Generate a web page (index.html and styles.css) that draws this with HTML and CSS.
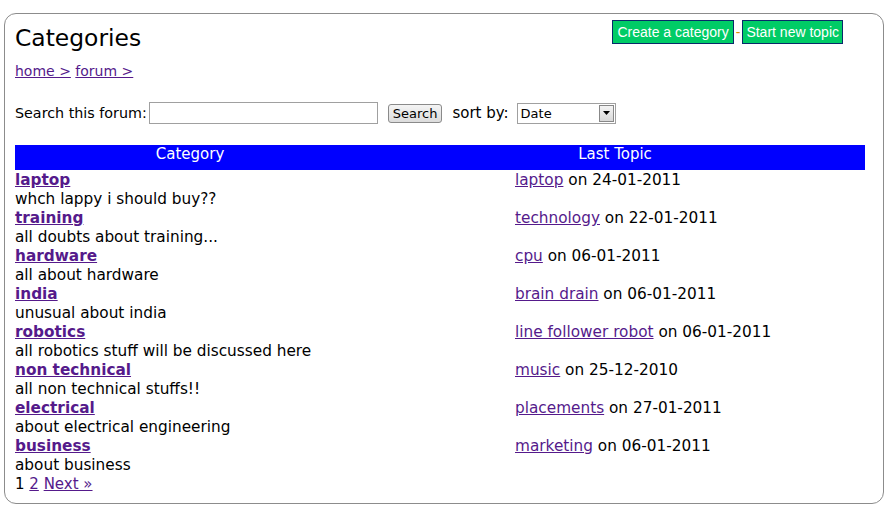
FILE: index.html
```html
<!DOCTYPE html>
<html>
<head>
<meta charset="utf-8">
<link rel="stylesheet" href="styles.css">
</head>
<body>
<div class="box">
  <div class="top">
    <h1 class="title">Categories</h1>
    <div class="actions">
      <a class="btn" href="#">Create a category</a><span class="sep">-</span><a class="btn" href="#">Start new topic</a>
    </div>
  </div>
  <div class="crumbs"><a href="#">home &gt;</a> <a href="#">forum &gt;</a></div>
  <div class="search">
    <span class="lbl">Search this forum:</span>
    <input class="sinput" type="text">
    <button class="sbtn">Search</button>
    <span class="sort">sort by:</span>
    <div class="select"><span>Date</span><span class="arrow"><svg width="7" height="4" viewBox="0 0 7 4"><path d="M0 0h7L3.5 4z" fill="#000"/></svg></span></div>
  </div>
  <div class="head">
    <div class="hc1">Category</div>
    <div class="hc2">Last Topic</div>
  </div>
  <div class="rows">
    <div class="row"><div><a class="cat" href="#">laptop</a><div>whch lappy i should buy??</div></div><div><a href="#">laptop</a> on 24-01-2011</div></div>
    <div class="row"><div><a class="cat" href="#">training</a><div>all doubts about training...</div></div><div><a href="#">technology</a> on 22-01-2011</div></div>
    <div class="row"><div><a class="cat" href="#">hardware</a><div>all about hardware</div></div><div><a href="#">cpu</a> on 06-01-2011</div></div>
    <div class="row"><div><a class="cat" href="#">india</a><div>unusual about india</div></div><div><a href="#">brain drain</a> on 06-01-2011</div></div>
    <div class="row"><div><a class="cat" href="#">robotics</a><div>all robotics stuff will be discussed here</div></div><div><a href="#">line follower robot</a> on 06-01-2011</div></div>
    <div class="row"><div><a class="cat" href="#">non technical</a><div>all non technical stuffs!!</div></div><div><a href="#">music</a> on 25-12-2010</div></div>
    <div class="row"><div><a class="cat" href="#">electrical</a><div>about electrical engineering</div></div><div><a href="#">placements</a> on 27-01-2011</div></div>
    <div class="row"><div><a class="cat" href="#">business</a><div>about business</div></div><div><a href="#">marketing</a> on 06-01-2011</div></div>
  </div>
  <div class="pages">1 <a href="#">2</a> <a href="#">Next »</a></div>
</div>
</body>
</html>
```
FILE: styles.css
```css
html, body { margin: 0; padding: 0; background: #fff; }
body {
  font-family: "DejaVu Sans", sans-serif;
  font-size: 15px;
  color: #000;
  padding: 13px 6px 0 4px;
}
a { color: #551a8b; }
.box {
  width: 868px;
  height: 489px;
  border: 1px solid #8c8c8c;
  border-radius: 12px;
  padding: 0 0 0 10px;
}
.top { display: flex; justify-content: space-between; align-items: flex-start; }
.title { font-size: 23.4px; font-weight: normal; margin: 10px 0 0 0; line-height: 28px; }
.actions {
  display: flex; align-items: center; margin: 6px 40px 0 0;
  font-family: "Liberation Sans", Arial, sans-serif; font-size: 14px;
}
.btn {
  display: block; background: #00cc66; color: #fff; text-decoration: none;
  border: 1px solid #0a2a6a; padding: 0 3px; line-height: 22px;
}
.btn:first-child { padding: 0 4px; }
.sep { color: #e08a00; padding: 0 2px; }
.crumbs { margin-top: 10px; line-height: 18px; font-size: 14px; }
.search { display: flex; align-items: center; margin-top: 21px; height: 24px; }
.lbl { margin-right: 2px; font-size: 14.3px; }
.sinput { width: 225px; height: 18px; border: 1px solid #a0a0a0; margin: 0; padding: 1px; }
.sbtn {
  margin-left: 10px; font-family: "DejaVu Sans", sans-serif; font-size: 13px;
  height: 19px; padding: 0 4px; border: 1px solid #8a8a8a; border-radius: 3px;
  background: linear-gradient(#f4f4f4, #dcdcdc); color: #000; line-height: 15px;
}
.sort { margin-left: 10px; margin-right: 8px; }
.select {
  width: 94px; height: 19px; border: 1px solid #a0a0a0; display: flex; align-items: center;
  justify-content: space-between; font-size: 13px; padding-left: 3px; box-sizing: content-box;
}
.arrow {
  width: 13px; height: 15px; border: 1px solid #888; margin-right: 1px;
  background: linear-gradient(#f4f4f4, #d8d8d8); display: flex; align-items: center; justify-content: center;
}
.head {
  display: flex; width: 850px; margin-top: 20px; background: #0000ff; color: #fff; height: 25px; line-height: 19px;
}
.hc1 { width: 350px; text-align: center; }
.hc2 { width: 500px; text-align: center; }
.rows { line-height: 19px; font-size: 15.3px; margin-top: 1px; }
.row { display: grid; grid-template-columns: 500px 350px; }
.cat { font-weight: bold; }
.pages { line-height: 19px; }
```
